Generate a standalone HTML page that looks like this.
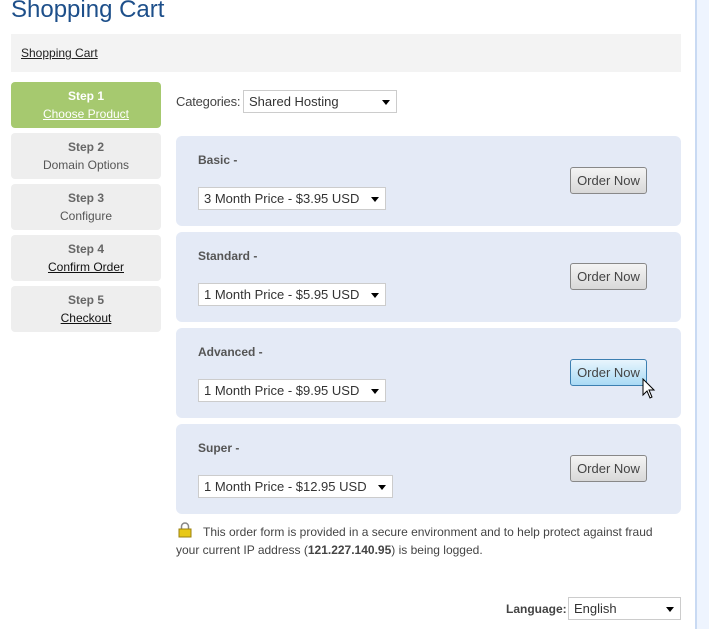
<!DOCTYPE html>
<html><head><meta charset="utf-8"><style>
*{box-sizing:border-box}
body{margin:0;width:709px;height:629px;background:#fff;font-family:"Liberation Sans",sans-serif;font-size:12px;color:#444;position:relative;overflow:hidden}
.abs{position:absolute}
h1{position:absolute;left:11px;top:-4px;margin:0;font-weight:normal;font-size:24px;color:#1d4f8a}
.crumb{left:11px;top:34px;width:670px;height:38px;background:#f3f3f3}
.crumb a{position:absolute;left:10px;top:12px;color:#222;text-decoration:underline;font-size:12px}
.step{left:11px;width:150px;height:46px;background:#eee;border-radius:4px;text-align:center;font-size:12px;line-height:18px;padding-top:5px;color:#555}
.step b{display:block;color:#666}
.step.on{background:#a6c96f;color:#fff}
.step.on b{color:#fff}
.step u{color:#111}
.step.on u{color:#fff}
.sel{position:absolute;background:#fff;border:1px solid #ccc;height:23px;font-size:13px;line-height:21px;padding-left:5px;color:#333}
.sel:after{content:"";position:absolute;right:6px;top:9px;border-left:4px solid transparent;border-right:4px solid transparent;border-top:5px solid #000}
.box{left:176px;width:505px;height:90px;background:#e4eaf6;border-radius:6px}
.box .name{position:absolute;left:22px;top:17px;font-weight:bold;color:#555;font-size:12px}
.box .sel{left:22px;top:51px}
.btn{position:absolute;left:394px;top:31px;width:77px;height:27px;border:1px solid #888;border-radius:3px;background:linear-gradient(#f4f4f4,#d8d8d8);font-size:13px;color:#444;text-align:center;line-height:25px}
.btn.hov{background:linear-gradient(#e8f5fd,#a9daf5);border-color:#3c7fb1}
.rbar{left:695px;top:0;width:14px;height:629px;background:#eef4fe;border-left:2px solid #c9daf3}
</style></head><body>
<h1>Shopping Cart</h1>
<div class="abs crumb"><a>Shopping Cart</a></div>
<div class="abs step on" style="top:82px"><b>Step 1</b><u>Choose Product</u></div>
<div class="abs step" style="top:133px"><b>Step 2</b>Domain Options</div>
<div class="abs step" style="top:184px"><b>Step 3</b>Configure</div>
<div class="abs step" style="top:235px"><b>Step 4</b><u>Confirm Order</u></div>
<div class="abs step" style="top:286px"><b>Step 5</b><u>Checkout</u></div>
<div class="abs" style="left:176px;top:94px;font-size:13px;color:#444;letter-spacing:-0.2px">Categories:</div>
<div class="sel" style="left:243px;top:90px;width:154px">Shared Hosting</div>
<div class="abs box" style="top:136px"><div class="name">Basic -</div><div class="sel" style="width:188px;top:51px">3 Month Price - $3.95 USD</div><div class="btn">Order Now</div></div>
<div class="abs box" style="top:232px"><div class="name">Standard -</div><div class="sel" style="width:188px">1 Month Price - $5.95 USD</div><div class="btn">Order Now</div></div>
<div class="abs box" style="top:328px"><div class="name">Advanced -</div><div class="sel" style="width:188px">1 Month Price - $9.95 USD</div><div class="btn hov">Order Now</div>
<svg class="abs" style="left:466px;top:50px" width="14" height="22" viewBox="0 0 14 22"><path d="M1 1 L1 17 L5 13 L8 20 L10 19 L7 12 L12 12 Z" fill="#fff" stroke="#000" stroke-width="1"/></svg></div>
<div class="abs box" style="top:424px"><div class="name">Super -</div><div class="sel" style="width:195px">1 Month Price - $12.95 USD</div><div class="btn">Order Now</div></div>
<svg class="abs" style="left:178px;top:522px" width="14" height="16" viewBox="0 0 14 16"><path d="M3.5 7V4.5a3.5 3.5 0 0 1 7 0V7" fill="none" stroke="#888" stroke-width="1.5"/><rect x="1" y="7" width="12" height="8" fill="#e8c816" stroke="#9a8010"/></svg>
<div class="abs" style="left:203px;top:525px;font-size:12px;color:#444">This order form is provided in a secure environment and to help protect against fraud</div>
<div class="abs" style="left:176px;top:543px;font-size:12px;color:#444">your current IP address (<b>121.227.140.95</b>) is being logged.</div>
<div class="abs" style="left:506px;top:602px;font-weight:bold;font-size:12px;color:#444">Language:</div>
<div class="sel" style="left:568px;top:597px;width:113px">English</div>
<div class="abs rbar"></div>
</body></html>
